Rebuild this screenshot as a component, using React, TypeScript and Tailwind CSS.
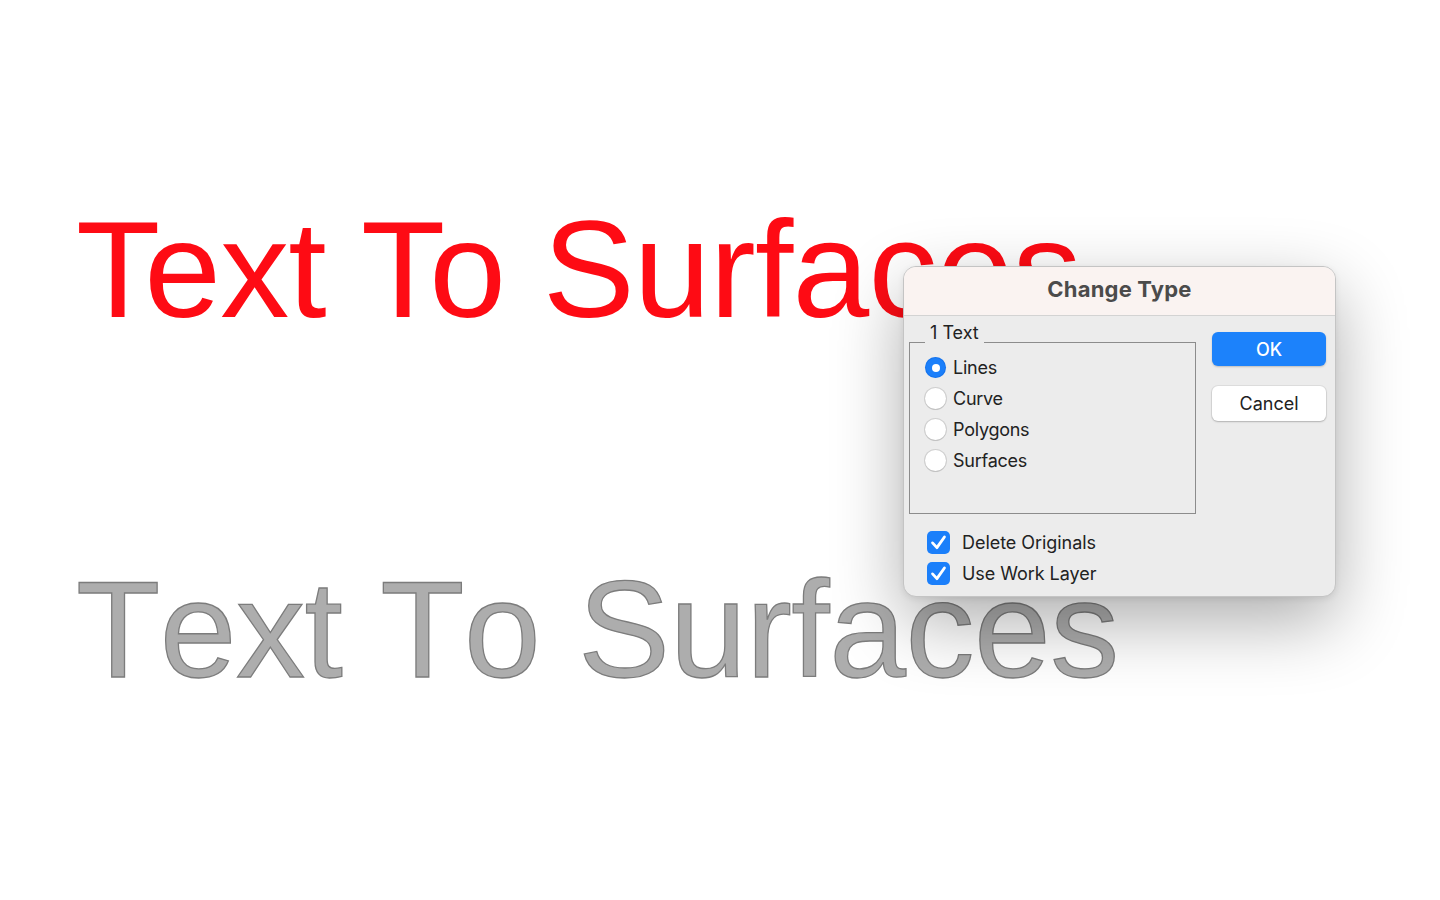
import React from "react";

const Radio = ({ checked, label }: { checked?: boolean; label: string }) => (
  <div className="flex items-center h-[31px]">
    {checked ? (
      <div className="w-[21px] h-[21px] rounded-full bg-[#1b7ffa] flex items-center justify-center shadow-[inset_0_0_0_1px_rgba(0,80,200,0.25)]">
        <div className="w-[8px] h-[8px] rounded-full bg-white" />
      </div>
    ) : (
      <div className="w-[21px] h-[21px] rounded-full bg-white shadow-[0_0_0_1px_rgba(0,0,0,0.12),0_1px_1px_rgba(0,0,0,0.08)]" />
    )}
    <span className="ml-[7px] text-[18px] text-[#222] tracking-[-0.25px]">{label}</span>
  </div>
);

const Check = ({ label }: { label: string }) => (
  <div className="flex items-center h-[31px]">
    <div className="w-[23px] h-[23px] rounded-[5px] bg-[#1b7ffa] flex items-center justify-center">
      <svg width="19" height="19" viewBox="0 0 24 24" fill="none">
        <path d="M4.5 12.5 L10 18.5 L19.5 5" stroke="white" strokeWidth="3.6" strokeLinecap="round" strokeLinejoin="round" />
      </svg>
    </div>
    <span className="ml-[12px] text-[18px] text-[#222] tracking-[-0.05px]">{label}</span>
  </div>
);

export default function App() {
  return (
    <div className="relative w-[1440px] h-[900px] overflow-hidden bg-white">
      <div className="flex flex-col pl-[76px] pt-[200px] font-['Liberation_Sans',Arial,sans-serif]">
        <div className="h-[138px] text-[138px] leading-[138px] text-[#fe0b14] whitespace-nowrap tracking-[-0.8px] [font-kerning:normal]">
          Text To Surfaces
        </div>
        <div className="mt-[222px] h-[138px] text-[138px] leading-[138px] text-[#adadad] whitespace-nowrap tracking-[-0.5px] [font-kerning:none] [-webkit-text-stroke:1.3px_#7c7c7c]">
          Text To Surfaces
        </div>
      </div>

      <div className="absolute left-[903px] top-[266px] w-[433px] h-[331px] rounded-[13px] overflow-hidden border border-[#c4c4c4] bg-[#ececec] shadow-[0_25px_70px_rgba(0,0,0,0.32),0_2px_6px_rgba(0,0,0,0.08)] font-['Inter','Noto_Sans',sans-serif]">
        <div className="h-[49px] pb-[3px] bg-[#faf3f1] border-b border-[#d3d3d3] flex items-center justify-center">
          <span className="text-[22px] font-bold text-[#4b4b4b] tracking-[0.2px]">Change Type</span>
        </div>
        <div className="flex">
          <div className="flex flex-col pl-[5px]">
            <div className="relative mt-[26px] w-[287px] h-[172px] border-[1.5px] border-[#8c8c8c]">
              <span className="absolute left-[15px] top-[-22px] px-[5px] bg-[#ececec] text-[18px] leading-[24px] text-[#222]">
                1 Text
              </span>
              <div className="flex flex-col pl-[15px] pt-[9px]">
                <Radio checked label="Lines" />
                <Radio label="Curve" />
                <Radio label="Polygons" />
                <Radio label="Surfaces" />
              </div>
            </div>
            <div className="flex flex-col pl-[18px] mt-[13px]">
              <Check label="Delete Originals" />
              <Check label="Use Work Layer" />
            </div>
          </div>
          <div className="flex flex-col ml-[16px] mt-[16px] gap-[20px]">
            <div className="w-[114px] h-[34px] rounded-[6px] bg-[#1c82fb] shadow-[0_1px_2px_rgba(0,0,0,0.2)] flex items-center justify-center text-[18px] font-medium text-white">
              OK
            </div>
            <div className="w-[114px] h-[35px] rounded-[6px] bg-white shadow-[0_0_0_1px_rgba(0,0,0,0.06),0_1px_2px_rgba(0,0,0,0.2)] flex items-center justify-center text-[18px] text-[#222]">
              Cancel
            </div>
          </div>
        </div>
      </div>
    </div>
  );
}
